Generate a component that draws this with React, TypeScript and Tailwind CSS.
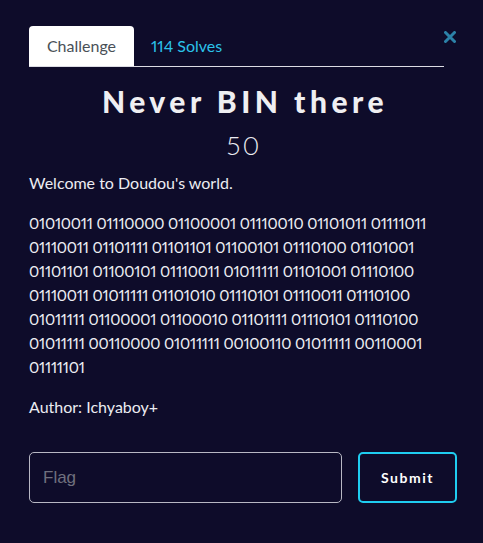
export default function App() {
  const binary =
    "01010011 01110000 01100001 01110010 01101011 01111011 01110011 01101111 01101101 01100101 01110100 01101001 01101101 01100101 01110011 01011111 01101001 01110100 01110011 01011111 01101010 01110101 01110011 01110100 01011111 01100001 01100010 01101111 01110101 01110100 01011111 00110000 01011111 00100110 01011111 00110001 01111101";

  return (
    <main className="min-h-[543px] w-full bg-[#0e0c2a] font-['Lato',sans-serif] text-[#ececf2] proportional-nums">
      <div className="relative w-[486px] pt-[26px] pl-[29px] pr-[29px]">
        {/* close */}
        <button className="absolute right-[30px] top-[31px] text-[#2c82a8]" aria-label="Close">
          <svg width="12" height="12" viewBox="0 0 12 12">
            <path d="M1.5 1.5 L10.5 10.5 M10.5 1.5 L1.5 10.5" stroke="currentColor" strokeWidth="3" strokeLinecap="round" />
          </svg>
        </button>

        <div className="flex h-[41px] w-[415px] items-stretch border-b border-[#dcdce4]">
          <div className="flex w-[105px] items-center justify-center rounded-t-[4px] bg-white text-[16px] text-[#495057]">
            Challenge
          </div>
          <div className="flex items-center pl-[17px] text-[16px] text-[#2bc3ea]">114 Solves</div>
        </div>

        <h1 className="mt-[16px] pl-[4px] text-center text-[30px] font-black leading-[36px] tracking-[4.5px] text-[#efeff2]">
          Never BIN there
        </h1>
        <p className="mt-[11px] pl-[2px] text-center text-[26px] font-light leading-[30px] tracking-[2px]">50</p>

        <div className="w-[415px]">
          <p className="mt-[11px] text-[16px] leading-[24px]">Welcome to Doudou's world.</p>
          <p className="mt-[16px] text-[15.5px] leading-[24px] tracking-[-0.2px]">{binary}</p>
          <p className="mt-[16px] text-[16px] leading-[24px]">Author: Ichyaboy+</p>
        </div>

        <div className="mt-[33px] flex gap-[16px]">
          <input
            placeholder="Flag"
            className="h-[51px] w-[313px] rounded-[5px] border border-[#b8b8c4] bg-transparent px-[13px] font-['Liberation_Sans',sans-serif] text-[17px] text-white placeholder:text-[#70707e] outline-none"
          />
          <button className="h-[51px] w-[99px] rounded-[5px] border-2 border-[#1fcdf0] text-[14px] font-bold tracking-[1.5px] text-white">
            Submit
          </button>
        </div>
      </div>
    </main>
  );
}
